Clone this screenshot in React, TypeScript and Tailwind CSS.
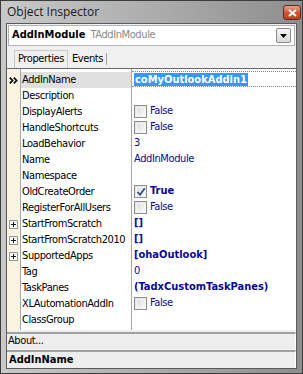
import React from "react";

type Row = {
  name: string;
  value?: string;
  kind?: "text" | "check";
  checked?: boolean;
  bold?: boolean;
  plus?: boolean;
  selected?: boolean;
};

const rows: Row[] = [
  { name: "AddInName", value: "coMyOutlookAddin1", selected: true, bold: true },
  { name: "Description" },
  { name: "DisplayAlerts", value: "False", kind: "check" },
  { name: "HandleShortcuts", value: "False", kind: "check" },
  { name: "LoadBehavior", value: "3" },
  { name: "Name", value: "AddInModule" },
  { name: "Namespace" },
  { name: "OldCreateOrder", value: "True", kind: "check", checked: true, bold: true },
  { name: "RegisterForAllUsers", value: "False", kind: "check" },
  { name: "StartFromScratch", value: "[]", bold: true, plus: true },
  { name: "StartFromScratch2010", value: "[]", bold: true, plus: true },
  { name: "SupportedApps", value: "[ohaOutlook]", bold: true, plus: true },
  { name: "Tag", value: "0" },
  { name: "TaskPanes", value: "(TadxCustomTaskPanes)", bold: true },
  { name: "XLAutomationAddIn", value: "False", kind: "check" },
  { name: "ClassGroup" },
];

const font = { fontFamily: '"DejaVu Sans Condensed", "Liberation Sans", sans-serif' };

function CheckBox({ checked }: { checked?: boolean }) {
  return (
    <span className="relative inline-block w-[13px] h-[13px] border border-[#8e8f8f] bg-gradient-to-br from-[#dcdcdc] to-[#fbfbfb] shrink-0">
      <span className="absolute inset-[1px] border border-[#f4f4f4]" />
      {checked && (
        <svg className="absolute left-[1px] top-[1px]" width="10" height="10" viewBox="0 0 10 10">
          <path d="M1.5 5 L4 7.8 L8.8 1.2" stroke="#3a4f8a" strokeWidth="1.8" fill="none" />
        </svg>
      )}
    </span>
  );
}

function PlusBox() {
  return (
    <svg width="9" height="9" viewBox="0 0 9 9">
      <rect x="0.5" y="0.5" width="8" height="8" fill="#fafafa" stroke="#9a9a9a" />
      <path d="M2 4.5 H7 M4.5 2 V7" stroke="#1a1a1a" strokeWidth="1" />
    </svg>
  );
}

export default function App() {
  return (
    <div
      className="w-[303px] h-[374px] relative border border-[#3c3c3c] bg-gradient-to-r from-[#c9c9c9] via-[#adadad] to-[#8e8e8e] flex flex-col text-[11px] tracking-[-0.4px] text-black"
      style={font}
    >
      {/* title bar */}
      <div className="h-[22px] flex items-center pl-[6px] pr-[2px] relative">
        <span
          className="text-[12px] tracking-normal text-[#1a1a1a]"
          style={{ fontFamily: '"Open Sans", "Noto Sans", sans-serif' }}
        >
          Object Inspector
        </span>
        <div className="absolute right-[1px] top-[4px] w-[18px] h-[15px] rounded-[3px] border border-[#5a2a22] bg-gradient-to-b from-[#e8a08c] via-[#d0553a] to-[#c0401f] flex items-center justify-center">
          <svg width="9" height="8" viewBox="0 0 9 8">
            <path d="M1 1 L8 7 M8 1 L1 7" stroke="#ffffff" strokeWidth="2" />
          </svg>
        </div>
      </div>

      {/* client */}
      <div className="mx-[5px] border border-[#5a5a5a] bg-[#f0f0f0] flex flex-col h-[346px]">
        {/* combo */}
        <div className="mx-[1px] mt-[1px] h-[21px] bg-white border border-[#aeb3b9] flex items-center pl-[3px] pr-[3px]">
          <span className="font-bold tracking-normal">AddInModule</span>
          <span className="ml-[5px] text-[#8a8a8a]">TAddInModule</span>
          <div className="ml-auto w-[15px] h-[15px] rounded-[2px] border border-[#8c8c8c] bg-gradient-to-b from-[#f6f6f6] to-[#d9d9d9] flex items-center justify-center">
            <svg width="7" height="4" viewBox="0 0 7 4">
              <path d="M0 0 H7 L3.5 4 Z" fill="#000" />
            </svg>
          </div>
        </div>

        {/* tabs */}
        <div className="h-[22px] flex items-end pl-[7px]">
          <div className="h-[18px] px-[3px] border border-b-0 border-[#c9c9c9] bg-[#f0f0f0] flex items-center">
            Properties
          </div>
          <div className="h-[18px] pl-[4px] pr-[3px] flex items-center">Events</div>
          <div className="h-[12px] mb-[3px] w-px bg-[#a0a0a0]" />
        </div>

        {/* grid */}
        <div className="h-[262px] border-t border-[#6a6a6a] bg-white flex relative">
          <div className="w-[14px] bg-[#fbf3e1] border-r border-[#a8a8a8] flex flex-col pt-[3px]">
            {rows.map((r, i) => (
              <div key={i} className="h-[16px] flex items-center justify-center">
                {r.selected && (
                  <svg width="9" height="7" viewBox="0 0 9 7">
                    <path d="M0.8 0.6 L3.6 3.5 L0.8 6.4 M4.8 0.6 L7.6 3.5 L4.8 6.4" stroke="#000" strokeWidth="1.6" fill="none" />
                  </svg>
                )}
                {r.plus && <PlusBox />}
              </div>
            ))}
          </div>
          <div className="w-[111px] border-r border-[#a8a8a8] flex flex-col pt-[3px]">
            {rows.map((r, i) => (
              <div
                key={i}
                className={`h-[16px] flex items-center pl-[1px] whitespace-nowrap overflow-hidden ${r.selected ? "bg-[#e0e0e0]" : ""}`}
              >
                {r.name}
              </div>
            ))}
          </div>
          <div className="flex-1 flex flex-col pt-[3px]">
            {rows.map((r, i) => (
              <div
                key={i}
                className={`h-[16px] flex items-center pl-[2px] ${
                  r.selected ? "border-y border-dotted border-[#8a8a8a] -mt-[1px]" : ""
                }`}
              >
                {r.kind === "check" && (
                  <>
                    <CheckBox checked={r.checked} />
                    <span className={`ml-[3px] text-[#0a0a90] ${r.bold ? "font-bold tracking-normal" : ""}`}>{r.value}</span>
                  </>
                )}
                {r.kind !== "check" && r.value && (
                  <span
                    className={`${r.selected ? "bg-[#3399ff] text-white px-[1px] leading-[13px]" : "text-[#0a0a90]"} ${
                      r.bold ? "font-bold tracking-normal" : ""
                    }`}
                  >
                    {r.value}
                  </span>
                )}
              </div>
            ))}
          </div>
        </div>

        {/* about */}
        <div className="mt-[2px] h-[17px] border-t-2 border-[#a0a0a0] bg-[#eeeeee] flex items-center pl-[1px] border-r border-r-white">
          About...
        </div>
        <div className="mt-[1px] h-[18px] border-t-2 border-[#a0a0a0] bg-[#eeeeee] flex items-center pl-[2px] font-bold tracking-normal border-r border-r-white">
          AddInName
        </div>
      </div>
    </div>
  );
}
